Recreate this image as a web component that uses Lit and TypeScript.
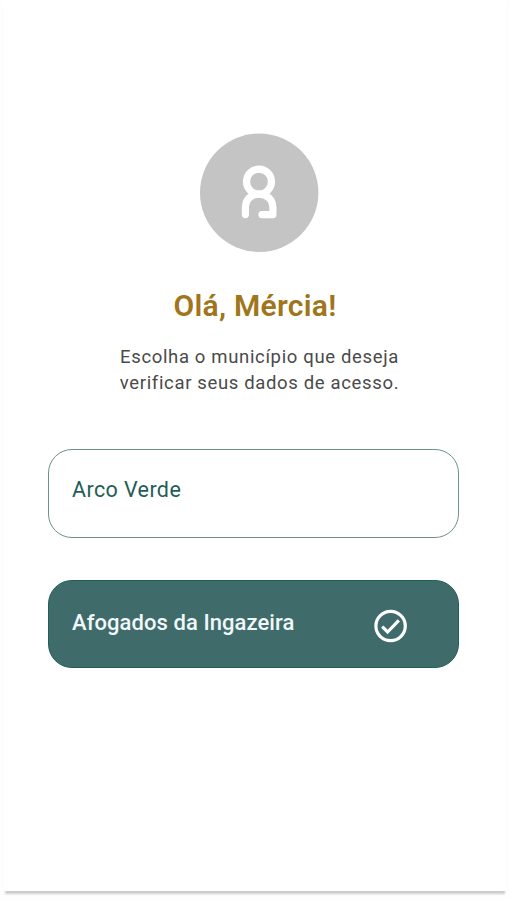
import { LitElement, html, css } from "lit";
import { customElement } from "lit/decorators.js";

@customElement("user-avatar")
class UserAvatar extends LitElement {
  static styles = css`
    :host { display: block; width: 119px; height: 119px; }
    svg { display: block; }
    .disc { fill: #c4c4c4; }
    .stroke { fill: none; stroke: #fff; stroke-width: 7.2; stroke-linecap: round; stroke-linejoin: round; }
  `;
  render() {
    return html`<svg width="119" height="119" viewBox="0 0 119 119">
      <circle class="disc" cx="59.2" cy="59.7" r="59.2" />
      <circle class="stroke" cx="59" cy="48.6" r="12.5" />
      <path class="stroke" d="M45.4 81.6V75C45.4 66.5 51 61.1 59 61.1C67 61.1 72.9 66.5 72.9 75V81.6H61.9" />
    </svg>`;
  }
}

@customElement("city-option")
class CityOption extends LitElement {
  static properties = { name: {}, selected: { type: Boolean, reflect: true } };
  declare name: string;
  declare selected: boolean;

  static styles = css`
    :host {
      display: flex;
      justify-content: space-between;
      box-sizing: border-box;
      height: 89px;
      padding: 27px 50px 0 23px;
      border: 1px solid #6d928d;
      border-radius: 24px;
      color: #245d58;
    }
    :host([selected]) {
      height: 88px;
      background: #3f6b6a;
      border-color: #215f5b;
      color: #f1f8fa;
    }
    .name { font-size: 21.5px; font-weight: 430; line-height: 26px; letter-spacing: 0.4px; white-space: nowrap; }
    :host([selected]) .name { padding-top: 2px; font-size: 22px; font-weight: 500; letter-spacing: 0.07px; }
    .check { margin-top: 1px; }
    .line { fill: none; stroke: #fff; stroke-width: 3.2; }
  `;
  render() {
    return html`<span class="name">${this.name}</span>
      ${this.selected
        ? html`<svg class="check" width="34" height="34" viewBox="0 0 34 34">
            <circle class="line" cx="16.6" cy="17" r="14.7" />
            <path class="line" d="M8.2 17.6L13.6 23L24.8 11.3" />
          </svg>`
        : null}`;
  }
}

@customElement("app-root")
class AppRoot extends LitElement {
  static styles = css`
    :host {
      display: flow-root;
      height: 900px;
      background: #fefefe;
      font-family: Roboto, "Liberation Sans", sans-serif;
    }
    .screen {
      display: flex;
      flex-direction: column;
      box-sizing: border-box;
      height: 891px;
      margin: 0 4px;
      padding: 133px 47px 0 44px;
      background: #fff;
      box-shadow: 0 4px 2px -1px rgba(0, 0, 0, 0.2);
    }
    user-avatar { margin-left: 152px; }
    .title {
      margin: 36px 0 0;
      padding-left: 3px;
      text-align: center;
      color: #a0751b;
      font-size: 30px;
      font-weight: 600;
      line-height: 36px;
      letter-spacing: 0.3px;
    }
    .lead {
      margin: 20px 0 0;
      padding-left: 12px;
      text-align: center;
      color: #4a4a4a;
      font-size: 18.5px;
      font-weight: 430;
      line-height: 26px;
      letter-spacing: 0.65px;
    }
    .options { display: flex; flex-direction: column; gap: 42px; margin-top: 53px; }
  `;
  render() {
    return html`<main class="screen">
      <user-avatar></user-avatar>
      <h1 class="title">Olá, Mércia!</h1>
      <p class="lead">Escolha o município que deseja<br />verificar seus dados de acesso.</p>
      <div class="options">
        <city-option name="Arco Verde"></city-option>
        <city-option name="Afogados da Ingazeira" selected></city-option>
      </div>
    </main>`;
  }
}
